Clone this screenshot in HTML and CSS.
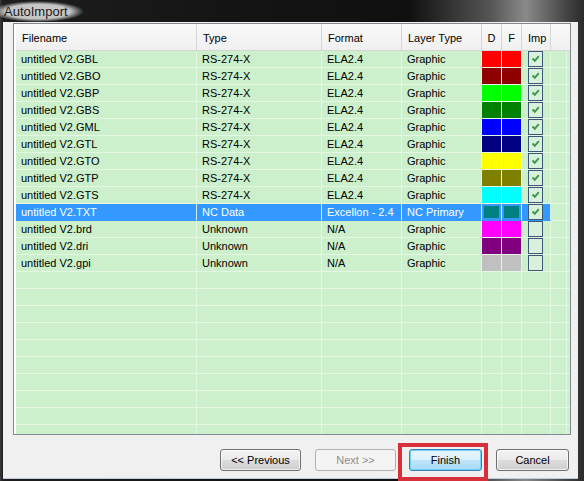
FILE: index.html
```html
<!DOCTYPE html>
<html>
<head>
<meta charset="utf-8">
<title>AutoImport</title>
<link rel="stylesheet" href="styles.css">
</head>
<body>
<div class="window">
  <div class="titlebar"><span class="title">AutoImport</span></div>
  <div class="client">
    <div class="list">
      <div class="row header">
        <div class="cell">Filename</div>
        <div class="cell">Type</div>
        <div class="cell">Format</div>
        <div class="cell">Layer Type</div>
        <div class="cell center">D</div>
        <div class="cell center">F</div>
        <div class="cell">Imp</div>
        <div class="cell blank"></div>
        <div class="cell blank"></div>
      </div>
      <div class="rows">
        <div class="row"><div class="cell">untitled V2.GBL</div><div class="cell">RS-274-X</div><div class="cell">ELA2.4</div><div class="cell">Graphic</div><div class="cell sw c-red"></div><div class="cell sw c-red"></div><div class="cell"><div class="chk"><svg viewBox="0 0 13 14" width="13" height="14"><path d="M3.5 6.5 L5.8 8.8 L9.8 4.2" fill="none" stroke="#3f9a45" stroke-width="2"/></svg></div></div><div class="cell"></div><div class="cell"></div></div>
        <div class="row"><div class="cell">untitled V2.GBO</div><div class="cell">RS-274-X</div><div class="cell">ELA2.4</div><div class="cell">Graphic</div><div class="cell sw c-maroon"></div><div class="cell sw c-maroon"></div><div class="cell"><div class="chk"><svg viewBox="0 0 13 14" width="13" height="14"><path d="M3.5 6.5 L5.8 8.8 L9.8 4.2" fill="none" stroke="#3f9a45" stroke-width="2"/></svg></div></div><div class="cell"></div><div class="cell"></div></div>
        <div class="row"><div class="cell">untitled V2.GBP</div><div class="cell">RS-274-X</div><div class="cell">ELA2.4</div><div class="cell">Graphic</div><div class="cell sw c-lime"></div><div class="cell sw c-lime"></div><div class="cell"><div class="chk"><svg viewBox="0 0 13 14" width="13" height="14"><path d="M3.5 6.5 L5.8 8.8 L9.8 4.2" fill="none" stroke="#3f9a45" stroke-width="2"/></svg></div></div><div class="cell"></div><div class="cell"></div></div>
        <div class="row"><div class="cell">untitled V2.GBS</div><div class="cell">RS-274-X</div><div class="cell">ELA2.4</div><div class="cell">Graphic</div><div class="cell sw c-green"></div><div class="cell sw c-green"></div><div class="cell"><div class="chk"><svg viewBox="0 0 13 14" width="13" height="14"><path d="M3.5 6.5 L5.8 8.8 L9.8 4.2" fill="none" stroke="#3f9a45" stroke-width="2"/></svg></div></div><div class="cell"></div><div class="cell"></div></div>
        <div class="row"><div class="cell">untitled V2.GML</div><div class="cell">RS-274-X</div><div class="cell">ELA2.4</div><div class="cell">Graphic</div><div class="cell sw c-blue"></div><div class="cell sw c-blue"></div><div class="cell"><div class="chk"><svg viewBox="0 0 13 14" width="13" height="14"><path d="M3.5 6.5 L5.8 8.8 L9.8 4.2" fill="none" stroke="#3f9a45" stroke-width="2"/></svg></div></div><div class="cell"></div><div class="cell"></div></div>
        <div class="row"><div class="cell">untitled V2.GTL</div><div class="cell">RS-274-X</div><div class="cell">ELA2.4</div><div class="cell">Graphic</div><div class="cell sw c-navy"></div><div class="cell sw c-navy"></div><div class="cell"><div class="chk"><svg viewBox="0 0 13 14" width="13" height="14"><path d="M3.5 6.5 L5.8 8.8 L9.8 4.2" fill="none" stroke="#3f9a45" stroke-width="2"/></svg></div></div><div class="cell"></div><div class="cell"></div></div>
        <div class="row"><div class="cell">untitled V2.GTO</div><div class="cell">RS-274-X</div><div class="cell">ELA2.4</div><div class="cell">Graphic</div><div class="cell sw c-yellow"></div><div class="cell sw c-yellow"></div><div class="cell"><div class="chk"><svg viewBox="0 0 13 14" width="13" height="14"><path d="M3.5 6.5 L5.8 8.8 L9.8 4.2" fill="none" stroke="#3f9a45" stroke-width="2"/></svg></div></div><div class="cell"></div><div class="cell"></div></div>
        <div class="row"><div class="cell">untitled V2.GTP</div><div class="cell">RS-274-X</div><div class="cell">ELA2.4</div><div class="cell">Graphic</div><div class="cell sw c-olive"></div><div class="cell sw c-olive"></div><div class="cell"><div class="chk"><svg viewBox="0 0 13 14" width="13" height="14"><path d="M3.5 6.5 L5.8 8.8 L9.8 4.2" fill="none" stroke="#3f9a45" stroke-width="2"/></svg></div></div><div class="cell"></div><div class="cell"></div></div>
        <div class="row"><div class="cell">untitled V2.GTS</div><div class="cell">RS-274-X</div><div class="cell">ELA2.4</div><div class="cell">Graphic</div><div class="cell sw c-cyan"></div><div class="cell sw c-cyan"></div><div class="cell"><div class="chk"><svg viewBox="0 0 13 14" width="13" height="14"><path d="M3.5 6.5 L5.8 8.8 L9.8 4.2" fill="none" stroke="#3f9a45" stroke-width="2"/></svg></div></div><div class="cell"></div><div class="cell"></div></div>
        <div class="row selected"><div class="cell">untitled V2.TXT</div><div class="cell">NC Data</div><div class="cell">Excellon - 2.4</div><div class="cell">NC Primary</div><div class="cell sw"><div class="inset c-teal"></div></div><div class="cell sw"><div class="inset c-teal"></div></div><div class="cell"><div class="chk"><svg viewBox="0 0 13 14" width="13" height="14"><path d="M3.5 6.5 L5.8 8.8 L9.8 4.2" fill="none" stroke="#3f9a45" stroke-width="2"/></svg></div></div><div class="cell plain"></div><div class="cell plain"></div></div>
        <div class="row"><div class="cell">untitled V2.brd</div><div class="cell">Unknown</div><div class="cell">N/A</div><div class="cell">Graphic</div><div class="cell sw c-magenta"></div><div class="cell sw c-magenta"></div><div class="cell"><div class="chk"></div></div><div class="cell"></div><div class="cell"></div></div>
        <div class="row"><div class="cell">untitled V2.dri</div><div class="cell">Unknown</div><div class="cell">N/A</div><div class="cell">Graphic</div><div class="cell sw c-purple"></div><div class="cell sw c-purple"></div><div class="cell"><div class="chk"></div></div><div class="cell"></div><div class="cell"></div></div>
        <div class="row"><div class="cell">untitled V2.gpi</div><div class="cell">Unknown</div><div class="cell">N/A</div><div class="cell">Graphic</div><div class="cell sw c-silver"></div><div class="cell sw c-silver"></div><div class="cell"><div class="chk"></div></div><div class="cell"></div><div class="cell"></div></div>
        <div class="row"><div class="cell"></div><div class="cell"></div><div class="cell"></div><div class="cell"></div><div class="cell"></div><div class="cell"></div><div class="cell"></div><div class="cell"></div><div class="cell"></div></div>
        <div class="row"><div class="cell"></div><div class="cell"></div><div class="cell"></div><div class="cell"></div><div class="cell"></div><div class="cell"></div><div class="cell"></div><div class="cell"></div><div class="cell"></div></div>
        <div class="row"><div class="cell"></div><div class="cell"></div><div class="cell"></div><div class="cell"></div><div class="cell"></div><div class="cell"></div><div class="cell"></div><div class="cell"></div><div class="cell"></div></div>
        <div class="row"><div class="cell"></div><div class="cell"></div><div class="cell"></div><div class="cell"></div><div class="cell"></div><div class="cell"></div><div class="cell"></div><div class="cell"></div><div class="cell"></div></div>
        <div class="row"><div class="cell"></div><div class="cell"></div><div class="cell"></div><div class="cell"></div><div class="cell"></div><div class="cell"></div><div class="cell"></div><div class="cell"></div><div class="cell"></div></div>
        <div class="row"><div class="cell"></div><div class="cell"></div><div class="cell"></div><div class="cell"></div><div class="cell"></div><div class="cell"></div><div class="cell"></div><div class="cell"></div><div class="cell"></div></div>
        <div class="row"><div class="cell"></div><div class="cell"></div><div class="cell"></div><div class="cell"></div><div class="cell"></div><div class="cell"></div><div class="cell"></div><div class="cell"></div><div class="cell"></div></div>
        <div class="row"><div class="cell"></div><div class="cell"></div><div class="cell"></div><div class="cell"></div><div class="cell"></div><div class="cell"></div><div class="cell"></div><div class="cell"></div><div class="cell"></div></div>
        <div class="row"><div class="cell"></div><div class="cell"></div><div class="cell"></div><div class="cell"></div><div class="cell"></div><div class="cell"></div><div class="cell"></div><div class="cell"></div><div class="cell"></div></div>
        <div class="row"><div class="cell"></div><div class="cell"></div><div class="cell"></div><div class="cell"></div><div class="cell"></div><div class="cell"></div><div class="cell"></div><div class="cell"></div><div class="cell"></div></div>
      </div>
    </div>
    <div class="buttons">
      <button class="btn w81">&lt;&lt; Previous</button>
      <button class="btn w81 disabled">Next &gt;&gt;</button>
      <div class="highlight">
        <button class="btn w73 default">Finish</button>
        <span class="annot"></span>
      </div>
      <button class="btn w73">Cancel</button>
    </div>
  </div>
</div>
</body>
</html>
```
FILE: styles.css
```css
html, body {
  margin: 0;
  padding: 0;
  width: 584px;
  height: 481px;
  overflow: hidden;
  background: #1c1c1c;
}
.window {
  width: 584px;
  height: 481px;
  display: flex;
  flex-direction: column;
  box-sizing: border-box;
  padding: 0 6px 3px 3px;
  background: linear-gradient(90deg, #3a3a3a 0, #1e1e1e 3px, #141414 40%, #101010 70%, #555 84%, #8a8a8a 90%, #444 97%, #2a2a2a 100%);
  font-family: "Liberation Sans", Arial, sans-serif;
}
.titlebar {
  height: 22px;
  flex: 0 0 22px;
  display: flex;
  align-items: center;
  margin-left: -3px;
}
.title {
  display: inline-block;
  font-size: 13px;
  line-height: 15px;
  color: #1a1a1a;
  padding: 3px 16px 3px 4px;
  background: radial-gradient(ellipse farthest-side at 45% 50%, rgba(205,205,205,1) 0, rgba(205,205,205,0.95) 70%, rgba(205,205,205,0) 100%);
}
.client {
  flex: 1;
  background: #f0f0f0;
  box-sizing: border-box;
  padding: 1px 0 7px 10px;
  display: flex;
  flex-direction: column;
  border-bottom: 1px solid #bfcbd6;
}
.list {
  height: 412px;
  margin-right: 7px;
  box-sizing: border-box;
  border: 1px solid #828790;
  background: #fff;
  padding-left: 2px;
  display: flex;
  flex-direction: column;
  overflow: hidden;
}
.row {
  display: grid;
  grid-template-columns: 181px 125px 80px 80px 20px 20px 29px 16px 1fr;
  height: 17px;
  font-size: 11px;
  color: #000;
}
.rows {
  flex: 1;
  overflow: hidden;
  background: #ccf0cc;
}
.cell {
  box-sizing: border-box;
  border-right: 1px solid #e3f7e3;
  border-bottom: 1px solid #e3f7e3;
  padding-left: 5px;
  line-height: 16px;
  white-space: nowrap;
  overflow: hidden;
}
.header {
  height: 27px;
  flex: 0 0 27px;
  background: linear-gradient(#f9f9f9, #f0f0f0);
  border-bottom: 1px solid #d5d5d5;
  box-sizing: border-box;
}
.header .cell {
  border-bottom: none;
  border-right: 1px solid #d5d5d5;
  line-height: 28px;
  padding-left: 6px;
  font-size: 11px;
}
.header .cell.center {
  padding-left: 0;
  text-align: center;
}
.header .cell.blank {
  border-right: none;
}
.sw { padding: 0; }
.selected .cell {
  background: #3399ff;
  color: #fff;
  border-right-color: #d8ecff;
  border-bottom-color: #3399ff;
}
.selected .cell.plain {
  background: transparent;
  border-right-color: #e3f7e3;
  border-bottom-color: #e3f7e3;
}
.inset {
  margin: 2px 2px 0 2px;
  height: 12px;
}
.chk {
  width: 15px;
  height: 16px;
  box-sizing: border-box;
  border: 1px solid #3a5874;
  background: #d9f1dc;
  margin-left: 1px;
}
.chk svg { display: block; }
.c-red { background: #ff0000; }
.c-maroon { background: #8f0000; }
.c-lime { background: #00ff00; }
.c-green { background: #008000; }
.c-blue { background: #0000ff; }
.c-navy { background: #000080; }
.c-yellow { background: #ffff00; }
.c-olive { background: #808000; }
.c-cyan { background: #00ffff; }
.c-teal { background: #008080; }
.c-magenta { background: #ff00ff; }
.c-purple { background: #800080; }
.c-silver { background: #c0c0c0; }
.buttons {
  margin-top: 14px;
  height: 22px;
  display: flex;
  justify-content: flex-end;
  padding-right: 9px;
  gap: 14px;
}
.btn {
  height: 22px;
  box-sizing: border-box;
  border: 1px solid #707070;
  border-radius: 3px;
  background: linear-gradient(#f2f2f2 0, #ebebeb 50%, #dddddd 51%, #cfcfcf 100%);
  font-family: "Liberation Sans", Arial, sans-serif;
  font-size: 11px;
  color: #000;
  padding: 0;
  box-shadow: inset 0 0 0 1px rgba(255,255,255,0.7);
}
.w81 { width: 81px; }
.w73 { width: 73px; }
.btn.disabled {
  border-color: #adb2b5;
  background: #f4f4f4;
  color: #8d8d8d;
  box-shadow: none;
}
.btn.default {
  border-color: #3c7fb1;
  background: linear-gradient(#eaf6fd 0, #d9f0fc 50%, #bee6fd 51%, #a7d9f5 100%);
  box-shadow: inset 0 0 0 1px #6fd0f8;
}
.highlight {
  position: relative;
  margin-left: -1px;
}
.annot {
  position: absolute;
  top: -6px;
  left: -11px;
  right: -6px;
  bottom: -10px;
  border: 4px solid #d8303b;
  pointer-events: none;
}
```
